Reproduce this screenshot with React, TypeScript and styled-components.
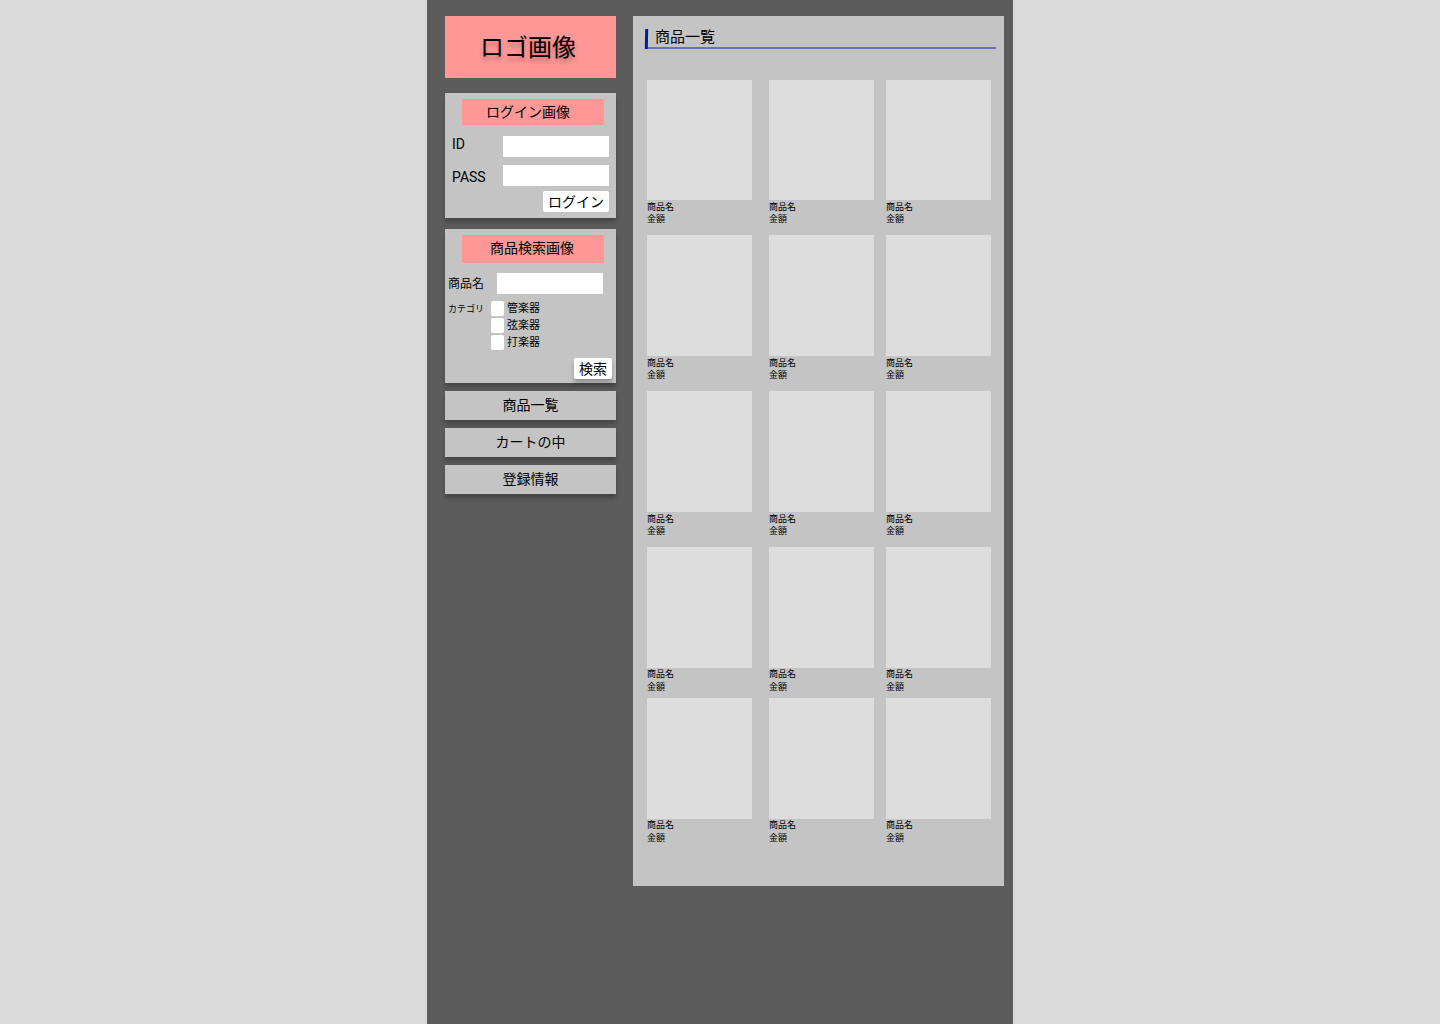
import React from "react";
import styled, { createGlobalStyle } from "styled-components";

const GlobalStyle = createGlobalStyle`
  *, *::before, *::after { box-sizing: border-box; }
  body {
    margin: 0;
    background: #dadada;
    color: #000;
    font-family: Roboto, "Noto Sans CJK JP", sans-serif;
    font-size: 14px;
    line-height: 20px;
  }
  button, input { font: inherit; color: inherit; }
`;

const Page = styled.div`
  display: flex;
  align-items: flex-start;
  gap: 17px;
  max-width: 586px;
  min-height: 100vh;
  margin: 0 auto;
  padding: 16px 9px 16px 18px;
  background: #5c5c5c;
`;

const Sidebar = styled.aside`
  flex: 0 0 171px;
`;

const Logo = styled.h1`
  display: flex;
  align-items: center;
  justify-content: center;
  height: 62px;
  margin: 0 0 15px;
  padding: 2px 5px 0 0;
  background: #ff9796;
  font-size: 24px;
  font-weight: 400;
  line-height: 28px;
  text-shadow: 0 4px 4px rgba(0, 0, 0, 0.25);
`;

const Panel = styled.form<{ $gap: number }>`
  display: flex;
  flex-direction: column;
  margin-bottom: ${(p) => p.$gap}px;
  padding: 6px 4px 4px 3px;
  background: #c4c4c4;
  box-shadow: 0 4px 4px rgba(0, 0, 0, 0.25);
`;

const Banner = styled.h2<{ $height: number; $shift: number }>`
  height: ${(p) => p.$height}px;
  margin: 0 8px 0 14px;
  padding-right: ${(p) => p.$shift}px;
  background: #ff9796;
  font-size: 14px;
  font-weight: 400;
  line-height: 26px;
  text-align: center;
`;

const LoginFields = styled.div`
  display: grid;
  grid-template-columns: 1fr 106px;
  row-gap: 8px;
  padding: 11px 3px 2px 4px;
`;

const LoginLabel = styled.label<{ $low?: boolean }>`
  line-height: ${(p) => (p.$low ? 24 : 16)}px;
`;

const TextBox = styled.input`
  width: 106px;
  height: 21px;
  padding: 0 4px;
  border: 0;
  border-radius: 0;
  background: #fff;
`;

const SubmitButton = styled.button<{ $raised?: boolean }>`
  align-self: flex-end;
  height: 21px;
  padding: 0 5px;
  border: 0;
  border-radius: 2px;
  background: #fff;
  line-height: 20px;
  cursor: pointer;
  box-shadow: ${(p) => (p.$raised ? "0 4px 4px rgba(0, 0, 0, 0.25)" : "none")};
`;

const LoginButton = styled(SubmitButton)`
  margin: 0 3px 2px 0;
`;

const NameRow = styled.div`
  display: flex;
  align-items: center;
  justify-content: space-between;
  padding: 10px 9px 7px 0;
`;

const NameLabel = styled.label`
  font-size: 12px;
`;

const CategoryGroup = styled.div`
  display: grid;
  grid-template-columns: 43px 1fr;
  margin-bottom: 8px;
`;

const CategoryTitle = styled.span`
  font-size: 9px;
  line-height: 16px;
`;

const CategoryList = styled.div`
  display: flex;
  flex-direction: column;
  gap: 2px;
`;

const CategoryOption = styled.label`
  display: flex;
  align-items: center;
  gap: 3px;
  height: 15px;
  font-size: 11px;
  line-height: 15px;
`;

const Checkbox = styled.input`
  appearance: none;
  width: 13px;
  height: 15px;
  margin: 0;
  border-radius: 2px;
  background: #fff;

  &:checked {
    background: #001f95;
  }
`;

const Nav = styled.nav`
  display: flex;
  flex-direction: column;
  gap: 8px;
`;

const NavLink = styled.a`
  height: 29px;
  background: #c4c4c4;
  color: inherit;
  line-height: 28px;
  text-align: center;
  text-decoration: none;
  box-shadow: 0 4px 4px rgba(0, 0, 0, 0.25);
`;

const Main = styled.main`
  flex: 1;
  min-width: 0;
  padding: 13px 8px 42px 12px;
  background: #c4c4c4;
`;

const Heading = styled.h2`
  display: flex;
  gap: 7px;
  height: 20px;
  margin: 0 0 31px;
  border-bottom: 2px solid #6674b3;
  font-size: 15px;
  font-weight: 400;
  line-height: 16px;

  &::before {
    content: "";
    flex: 0 0 3px;
    height: 20px;
    background: #001f95;
    transform: skewX(-1deg);
  }
`;

const ProductGrid = styled.ul`
  display: grid;
  grid-template-columns: 122fr 117fr 105fr;
  margin: 0;
  padding: 0 5px 0 2px;
  list-style: none;
`;

const Product = styled.li<{ $space: number }>`
  padding-bottom: ${(p) => p.$space}px;
  font-size: 9px;
  line-height: 12px;

  &:nth-child(3n + 1) { padding-right: 17px; }
  &:nth-child(3n + 2) { padding-right: 12px; }
`;

const Photo = styled.div<{ $height: number }>`
  height: ${(p) => p.$height}px;
  background: #ddd;
`;

const Caption = styled.div<{ $tight: boolean }>`
  display: grid;
  gap: ${(p) => (p.$tight ? 1 : 0)}px;
  padding-top: ${(p) => (p.$tight ? 0 : 1)}px;
`;

const categories = ["管楽器", "弦楽器", "打楽器"];
const links = ["商品一覧", "カートの中", "登録情報"];
const rows = [
  { photo: 120, tight: false, space: 10 },
  { photo: 121, tight: false, space: 10 },
  { photo: 121, tight: false, space: 10 },
  { photo: 121, tight: true, space: 5 },
  { photo: 121, tight: true, space: 0 },
];
const products = rows.flatMap((row) => [row, row, row]);

const stay = (event: React.FormEvent) => event.preventDefault();

export default function App() {
  return (
    <>
      <GlobalStyle />
      <Page>
        <Sidebar>
          <Logo>ロゴ画像</Logo>

          <Panel $gap={11} onSubmit={stay}>
            <Banner $height={26} $shift={10}>ログイン画像</Banner>
            <LoginFields>
              <LoginLabel htmlFor="login-id">ID</LoginLabel>
              <TextBox id="login-id" type="text" />
              <LoginLabel htmlFor="login-pass" $low>PASS</LoginLabel>
              <TextBox id="login-pass" type="password" />
            </LoginFields>
            <LoginButton type="submit">ログイン</LoginButton>
          </Panel>

          <Panel $gap={8} onSubmit={stay}>
            <Banner $height={28} $shift={2}>商品検索画像</Banner>
            <NameRow>
              <NameLabel htmlFor="product-name">商品名</NameLabel>
              <TextBox id="product-name" type="text" />
            </NameRow>
            <CategoryGroup role="group" aria-labelledby="category-title">
              <CategoryTitle id="category-title">カテゴリ</CategoryTitle>
              <CategoryList>
                {categories.map((name) => (
                  <CategoryOption key={name}>
                    <Checkbox type="checkbox" name="category" value={name} />
                    {name}
                  </CategoryOption>
                ))}
              </CategoryList>
            </CategoryGroup>
            <SubmitButton type="submit" $raised>検索</SubmitButton>
          </Panel>

          <Nav>
            {links.map((name) => (
              <NavLink key={name} href="#">{name}</NavLink>
            ))}
          </Nav>
        </Sidebar>

        <Main>
          <Heading>商品一覧</Heading>
          <ProductGrid>
            {products.map((item, index) => (
              <Product key={index} $space={item.space}>
                <Photo $height={item.photo} />
                <Caption $tight={item.tight}>
                  <span>商品名</span>
                  <span>金額</span>
                </Caption>
              </Product>
            ))}
          </ProductGrid>
        </Main>
      </Page>
    </>
  );
}
